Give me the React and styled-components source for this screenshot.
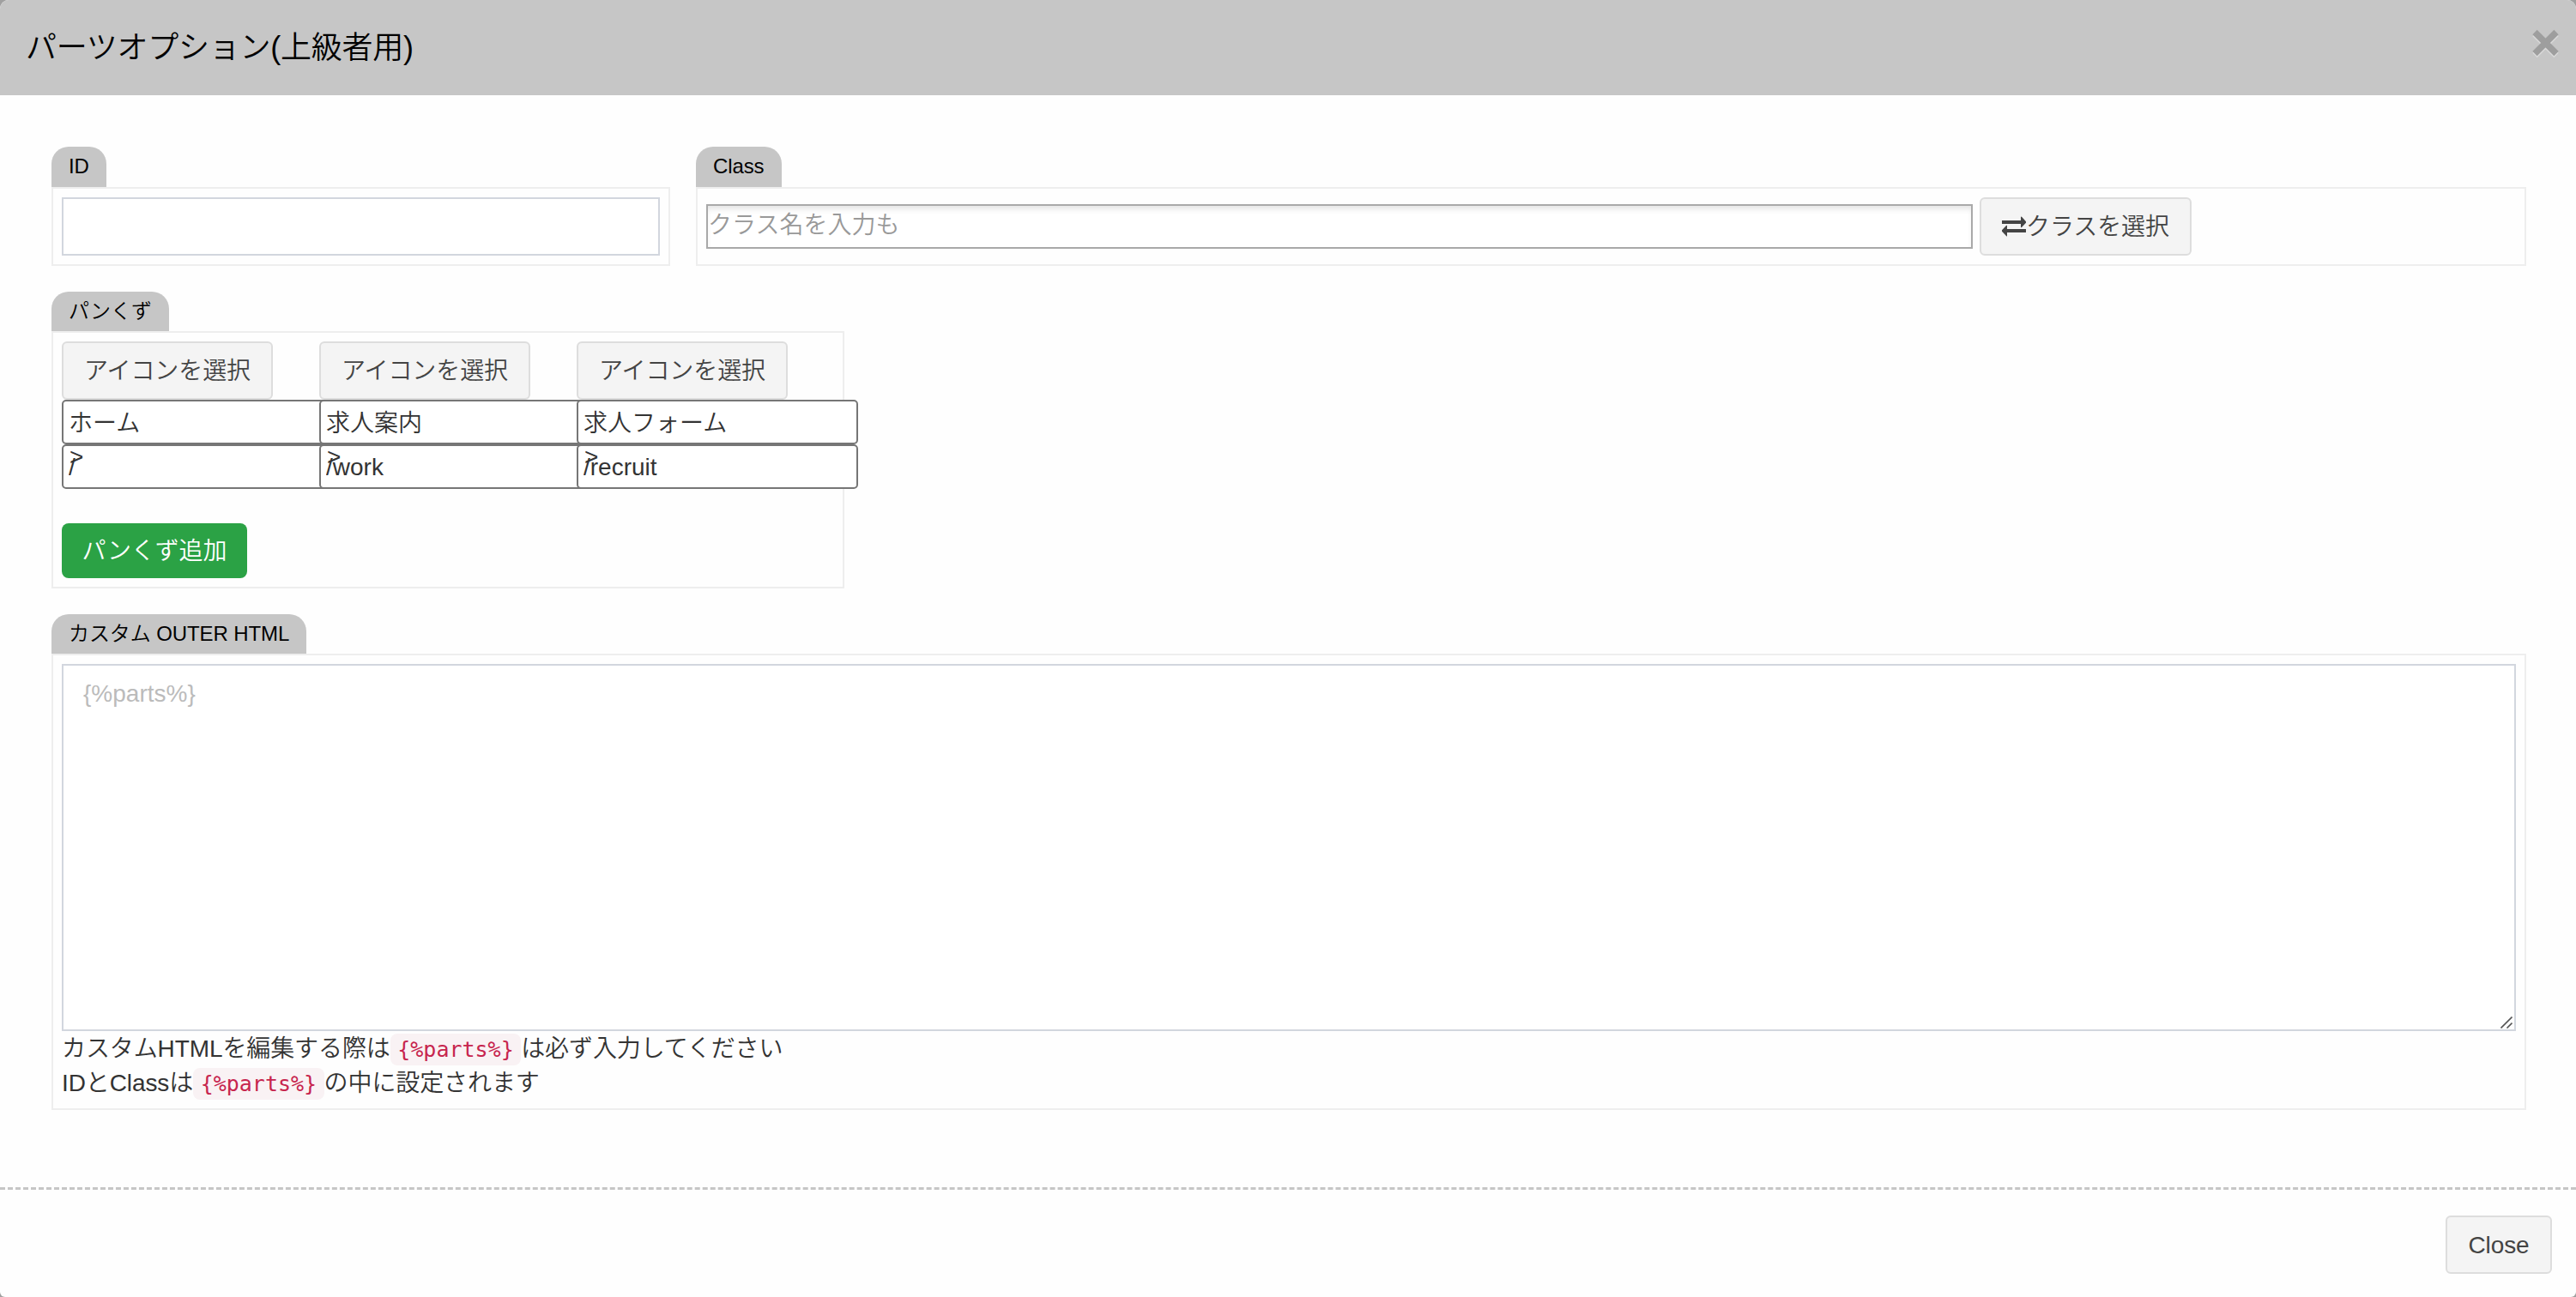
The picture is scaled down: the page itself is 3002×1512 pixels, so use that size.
import React from "react";
import styled, { createGlobalStyle, css } from "styled-components";

const Global = createGlobalStyle`
  *, *::before, *::after { box-sizing: border-box; }
  html { background: #a0a0a0; }
  body { margin: 0; }
  input, textarea, button { font: inherit; color: inherit; margin: 0; }
`;

const Modal = styled.div`
  width: 3002px;
  height: 1512px;
  display: flex;
  flex-direction: column;
  background: #fefefe;
  border-radius: 10px 10px 6px 6px;
  overflow: hidden;
  color: #333;
  font-family: "Liberation Sans", "Noto Sans CJK JP", sans-serif;
  font-weight: 350;
  font-size: 28px;
  line-height: 40px;
`;

const Header = styled.header`
  height: 111px;
  flex: none;
  display: flex;
  justify-content: space-between;
  padding: 0 19px 0 30px;
  background: #c6c6c6;
`;

const Title = styled.h1`
  margin: 0;
  padding-top: 29px;
  color: #000;
  font-size: 36px;
  font-weight: 350;
  line-height: 54px;
  letter-spacing: -0.25px;
`;

const CloseIcon = styled.svg`
  width: 32px;
  height: 34px;
  margin-top: 34px;
`;

const Body = styled.main`
  display: flex;
  flex-direction: column;
  flex: none;
  height: 1273px;
  padding: 60px 58px 0 60px;
`;

const Row = styled.div`
  display: flex;
  gap: 30px;
`;

const Group = styled.section`
  display: flex;
  flex-direction: column;
  align-items: flex-start;
  flex: none;
  width: ${(p) => p.$width}px;
  margin-bottom: 30px;
`;

const Tab = styled.div`
  height: ${(p) => p.$height || 46}px;
  padding: 0 20px;
  border-radius: 20px 20px 0 0;
  background: #c6c6c6;
  color: #000;
  font-size: 24px;
  line-height: 46px;
  letter-spacing: -0.1px;
  white-space: nowrap;
`;

const Panel = styled.div`
  width: 100%;
  height: ${(p) => p.$height}px;
  padding: 10px;
  border: 2px solid #eee;
`;

const InlinePanel = styled(Panel)`
  display: flex;
  align-items: center;
  gap: 8px;
`;

const IdInput = styled.input`
  display: block;
  width: 100%;
  height: 68px;
  padding: 0 24px;
  border: 2px solid #d2d6de;
  background: #fff;
  outline: none;
`;

const ClassInput = styled.input`
  width: 1476px;
  height: 52px;
  padding: 0 0 2px;
  border: 2px solid #a9a9a9;
  background: #fff;
  box-shadow: inset 0 6px 6px -2px #e6e6e6;
  outline: none;
  &::placeholder { color: #999; opacity: 1; }
`;

const Button = styled.button`
  display: inline-flex;
  align-items: center;
  justify-content: center;
  height: 68px;
  width: ${(p) => p.$width}px;
  padding: 1px 0 0;
  white-space: nowrap;
  border-radius: 6px;
  letter-spacing: -0.1px;
  ${(p) =>
    p.$primary
      ? css`
          height: 64px;
          border: 0;
          border-radius: 8px;
          background: #2ba245;
          color: #fff;
        `
      : css`
          border: 2px solid #ddd;
          background: #f4f4f4;
          color: #444;
        `}
`;

const SwapIcon = styled.svg`
  width: 28px;
  height: 25px;
  flex: none;
`;

const CrumbList = styled.ol`
  display: flex;
  list-style: none;
  margin: 0 0 40px;
  padding: 0;
`;

const Crumb = styled.li`
  position: relative;
  display: flex;
  flex-direction: column;
  align-items: flex-start;
  width: 300px;
`;

const CrumbInput = styled.input`
  width: 328px;
  height: 52px;
  padding: ${(p) => (p.$url ? "1px 6px 0" : "0 6px 2px")};
  border: 2px solid #767676;
  border-radius: 5px;
  background: #fff;
  outline: none;
`;

const Separator = styled.span`
  position: absolute;
  left: 9px;
  top: 115px;
`;

const EditorWrap = styled.div`
  position: relative;
  height: 428px;
`;

const Editor = styled.textarea`
  display: block;
  width: 100%;
  height: 428px;
  padding: 13px 23px;
  border: 2px solid #d2d6de;
  background: #fff;
  resize: none;
  outline: none;
  &::placeholder { color: #bbb; opacity: 1; }
`;

const Grip = styled.svg`
  position: absolute;
  right: 4px;
  bottom: 3px;
  width: 14px;
  height: 14px;
`;

const Help = styled.p`
  margin: 0;
  height: 40px;
  padding-top: 1px;
  letter-spacing: -0.1px;
  white-space: nowrap;
`;

const Code = styled.code`
  padding: 4px 8.5px;
  border-radius: 8px;
  background: #f9f2f4;
  color: #c7254e;
  font-family: "DejaVu Sans Mono", monospace;
  font-size: 25px;
  letter-spacing: 0;
`;

const Footer = styled.footer`
  flex: 1;
  display: flex;
  justify-content: flex-end;
  align-items: flex-start;
  padding: 30px 28px 0;
  border-top: 3px dashed #c6c6c6;
`;

const crumbs = [
  { label: "ホーム", url: "/" },
  { label: "求人案内", url: "/work" },
  { label: "求人フォーム", url: "/recruit" },
];

export default function App() {
  return (
    <>
      <Global />
      <Modal>
        <Header>
          <Title>パーツオプション(上級者用)</Title>
          <CloseIcon viewBox="0 0 32 34">
            <path d="M3 5.5 L28 30.5 M28 5.5 L3 30.5" stroke="#dadada" strokeWidth="7.5" />
            <path d="M3 3.5 L28 28.5 M28 3.5 L3 28.5" stroke="#9e9e9e" strokeWidth="7.5" />
          </CloseIcon>
        </Header>
        <Body>
          <Row>
            <Group $width={721}>
              <Tab $height={47}>ID</Tab>
              <Panel $height={92}>
                <IdInput />
              </Panel>
            </Group>
            <Group $width={2133}>
              <Tab $height={47}>Class</Tab>
              <InlinePanel $height={92}>
                <ClassInput placeholder="クラス名を入力も" />
                <Button $width={247}>
                  <SwapIcon viewBox="0 0 28 25" fill="#444">
                    <path d="M0 5H22V1Q22 0 23 .7L28 6.2V7.8L23 13Q22 13.5 22 12.5V9H0Z M28 19V15H6V11.5Q6 10.5 5 11L0 16.2V17.8L5 23Q6 24 6 23V19Z" />
                  </SwapIcon>
                  クラスを選択
                </Button>
              </InlinePanel>
            </Group>
          </Row>
          <Group $width={924}>
            <Tab>パンくず</Tab>
            <Panel $height={300}>
              <CrumbList>
                {crumbs.map((c) => (
                  <Crumb key={c.url}>
                    <Button $width={246}>アイコンを選択</Button>
                    <CrumbInput defaultValue={c.label} />
                    <CrumbInput $url defaultValue={c.url} />
                    <Separator>&gt;</Separator>
                  </Crumb>
                ))}
              </CrumbList>
              <Button $primary $width={216}>パンくず追加</Button>
            </Panel>
          </Group>
          <Group $width={2884}>
            <Tab>カスタム OUTER HTML</Tab>
            <Panel $height={532}>
              <EditorWrap>
                <Editor placeholder="{%parts%}" />
                <Grip viewBox="0 0 14 14" stroke="#555" strokeWidth="1.6">
                  <path d="M0.5 13.5 L13.5 0.5 M7.5 13.5 L13.5 7.5" />
                </Grip>
              </EditorWrap>
              <Help>カスタムHTMLを編集する際は<Code>{"{%parts%}"}</Code>は必ず入力してください</Help>
              <Help>IDとClassは<Code>{"{%parts%}"}</Code>の中に設定されます</Help>
            </Panel>
          </Group>
        </Body>
        <Footer>
          <Button $width={124}>Close</Button>
        </Footer>
      </Modal>
    </>
  );
}
